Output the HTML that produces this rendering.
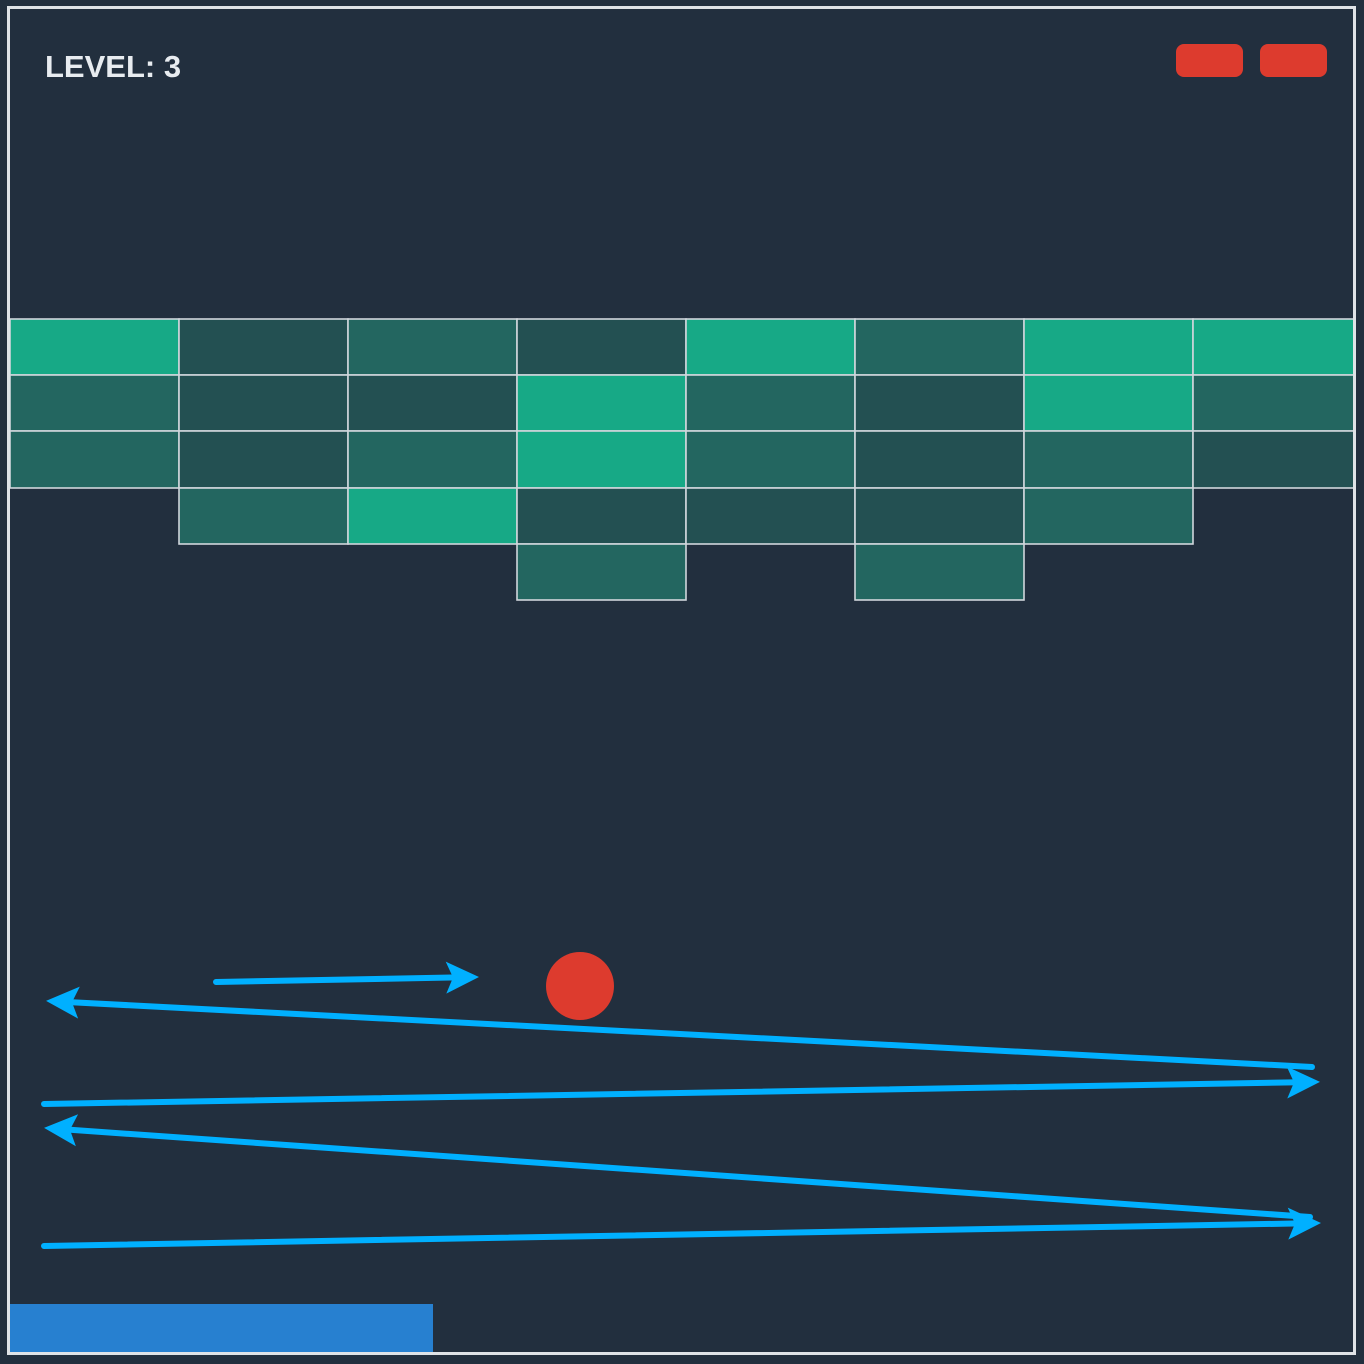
<!DOCTYPE html>
<html><head><meta charset="utf-8"><style>
html,body{margin:0;padding:0;background:#222f3e;}
svg{display:block}
</style></head><body>
<svg width="1364" height="1364" viewBox="0 0 1364 1364" xmlns="http://www.w3.org/2000/svg">
<defs>
<marker id="ah" markerUnits="userSpaceOnUse" markerWidth="60" markerHeight="60" refX="0" refY="0" viewBox="-30 -30 60 60" orient="auto" overflow="visible">
<path d="M21,0 L-12,-16 L-5,0 L-12,16 Z" fill="#00b0ff"/>
</marker>
<clipPath id="c"><rect x="10" y="9" width="1343" height="1343"/></clipPath>
</defs>
<rect width="1364" height="1364" fill="#222f3e"/>
<g clip-path="url(#c)" stroke="#d0d6dc" stroke-width="1.6">
<!-- row 1 -->
<rect x="10" y="319" width="169" height="56" fill="#17a986"/>
<rect x="179" y="319" width="169" height="56" fill="#235052"/>
<rect x="348" y="319" width="169" height="56" fill="#236660"/>
<rect x="517" y="319" width="169" height="56" fill="#235052"/>
<rect x="686" y="319" width="169" height="56" fill="#17a986"/>
<rect x="855" y="319" width="169" height="56" fill="#236660"/>
<rect x="1024" y="319" width="169" height="56" fill="#17a986"/>
<rect x="1193" y="319" width="169" height="56" fill="#17a986"/>
<!-- row 2 -->
<rect x="10" y="375" width="169" height="56" fill="#236660"/>
<rect x="179" y="375" width="169" height="56" fill="#235052"/>
<rect x="348" y="375" width="169" height="56" fill="#235052"/>
<rect x="517" y="375" width="169" height="56" fill="#17a986"/>
<rect x="686" y="375" width="169" height="56" fill="#236660"/>
<rect x="855" y="375" width="169" height="56" fill="#235052"/>
<rect x="1024" y="375" width="169" height="56" fill="#17a986"/>
<rect x="1193" y="375" width="169" height="56" fill="#236660"/>
<!-- row 3 -->
<rect x="10" y="431" width="169" height="57" fill="#236660"/>
<rect x="179" y="431" width="169" height="57" fill="#235052"/>
<rect x="348" y="431" width="169" height="57" fill="#236660"/>
<rect x="517" y="431" width="169" height="57" fill="#17a986"/>
<rect x="686" y="431" width="169" height="57" fill="#236660"/>
<rect x="855" y="431" width="169" height="57" fill="#235052"/>
<rect x="1024" y="431" width="169" height="57" fill="#236660"/>
<rect x="1193" y="431" width="169" height="57" fill="#235052"/>
<!-- row 4 -->
<rect x="179" y="488" width="169" height="56" fill="#236660"/>
<rect x="348" y="488" width="169" height="56" fill="#17a986"/>
<rect x="517" y="488" width="169" height="56" fill="#235052"/>
<rect x="686" y="488" width="169" height="56" fill="#235052"/>
<rect x="855" y="488" width="169" height="56" fill="#235052"/>
<rect x="1024" y="488" width="169" height="56" fill="#236660"/>
<!-- row 5 -->
<rect x="517" y="544" width="169" height="56" fill="#236660"/>
<rect x="855" y="544" width="169" height="56" fill="#236660"/>
</g>
<!-- paddle -->
<rect x="10" y="1304" width="423" height="48" fill="#2780d0"/>
<!-- ball -->
<circle cx="580" cy="986" r="34" fill="#dd3b2e"/>
<!-- arrows -->
<g stroke="#00b0ff" stroke-width="6" stroke-linecap="round" fill="none">
<line x1="216" y1="982" x2="458" y2="977.4" marker-end="url(#ah)"/>
<line x1="1312" y1="1067" x2="67" y2="1002" marker-end="url(#ah)"/>
<line x1="44" y1="1104" x2="1299" y2="1082.3" marker-end="url(#ah)"/>
<line x1="1310" y1="1217" x2="65" y2="1129.4" marker-end="url(#ah)"/>
<line x1="44" y1="1246" x2="1300" y2="1223.4" marker-end="url(#ah)"/>
</g>
<!-- lives -->
<rect x="1176" y="44" width="67" height="33" rx="8" fill="#dd3b2e"/>
<rect x="1260" y="44" width="67" height="33" rx="8" fill="#dd3b2e"/>
<!-- text -->
<text x="45" y="77" font-family="Liberation Sans, sans-serif" font-weight="bold" font-size="31" fill="#e8ecf0">LEVEL: 3</text>
<!-- border -->
<rect x="8.5" y="7.5" width="1346" height="1346" fill="none" stroke="#dfe3e7" stroke-width="3"/>
</svg>
</body></html>
